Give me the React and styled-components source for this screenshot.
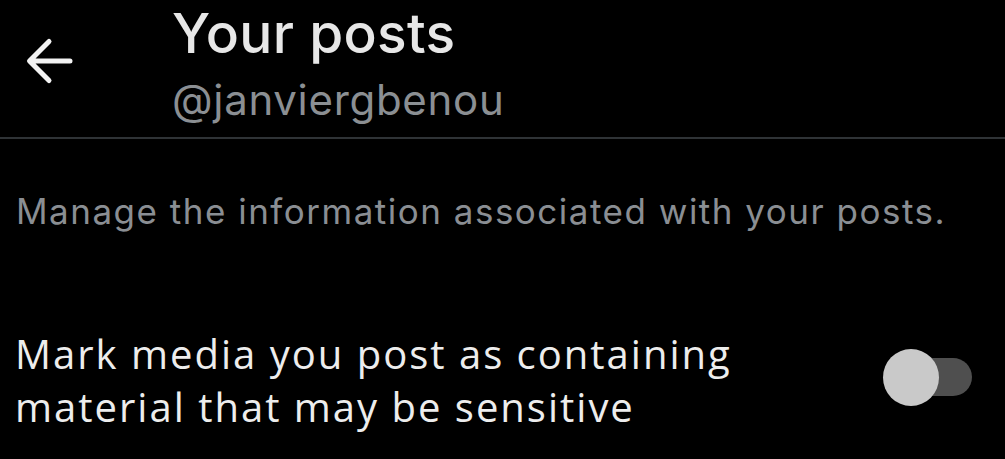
import React from "react";
import styled, { createGlobalStyle } from "styled-components";

const Global = createGlobalStyle`
  html, body { margin: 0; padding: 0; background: #000; }
  body { font-family: Inter, "Noto Sans", sans-serif; color: #e7e9ea; }
  * { box-sizing: border-box; }
`;

const Page = styled.div`
  width: 1005px;
  height: 459px;
  background: #000;
  overflow: hidden;
`;

const Header = styled.header`
  display: flex;
  align-items: flex-start;
  padding-top: 2px;
  height: 139px;
  border-bottom: 2px solid #2f3336;
`;

const BackButton = styled.button`
  width: 172px;
  flex: none;
  background: none;
  border: 0;
  padding: 35px 0 0 25px;
  display: flex;
  cursor: pointer;
`;

const Titles = styled.div`
  display: flex;
  flex-direction: column;
  gap: 11px;
`;

const Title = styled.h1`
  margin: 0;
  font-family: Inter, sans-serif;
  font-weight: 500;
  font-size: 55px;
  line-height: 62px;
  color: #e7e7e7;
  letter-spacing: 0.3px;
`;

const Handle = styled.div`
  font-family: Inter, sans-serif;
  font-size: 42px;
  line-height: 50px;
  letter-spacing: 0.7px;
  color: #8b8f93;
`;

const Description = styled.p`
  margin: 0;
  padding: 52px 0 0 16px;
  font-family: Inter, sans-serif;
  font-size: 35px;
  line-height: 40px;
  letter-spacing: 1.5px;
  color: #8a8e93;
`;

const SettingRow = styled.div`
  display: flex;
  align-items: center;
  justify-content: space-between;
  padding: 96px 33px 0 15px;
`;

const SettingLabel = styled.div`
  font-family: "Open Sans", sans-serif;
  font-size: 40px;
  line-height: 53px;
  letter-spacing: 2px;
  color: #ededed;
`;

const Switch = styled.div`
  position: relative;
  width: 89px;
  height: 57px;
  flex: none;
  margin-top: -6px;
`;

const Track = styled.div`
  position: absolute;
  right: 0;
  top: 9px;
  width: 80px;
  height: 38px;
  border-radius: 19px;
  background: #4f4f4f;
`;

const Thumb = styled.div`
  position: absolute;
  left: 0;
  top: 0;
  width: 56px;
  height: 57px;
  border-radius: 50%;
  background: #c9c9c9;
`;

function BackArrow() {
  return (
    <svg width="48" height="48" viewBox="0 0 48 48" fill="none">
      <path
        d="M45 24H5M24 4.5L4.5 24L24 43.5"
        stroke="#f2f2f2"
        strokeWidth="5"
        strokeLinecap="round"
        strokeLinejoin="round"
      />
    </svg>
  );
}

export default function App() {
  return (
    <Page>
      <Global />
      <Header>
        <BackButton aria-label="Back">
          <BackArrow />
        </BackButton>
        <Titles>
          <Title>Your posts</Title>
          <Handle>@janviergbenou</Handle>
        </Titles>
      </Header>
      <Description>Manage the information associated with your posts.</Description>
      <SettingRow>
        <SettingLabel>
          Mark media you post as containing
          <br />
          material that may be sensitive
        </SettingLabel>
        <Switch>
          <Track />
          <Thumb />
        </Switch>
      </SettingRow>
    </Page>
  );
}
